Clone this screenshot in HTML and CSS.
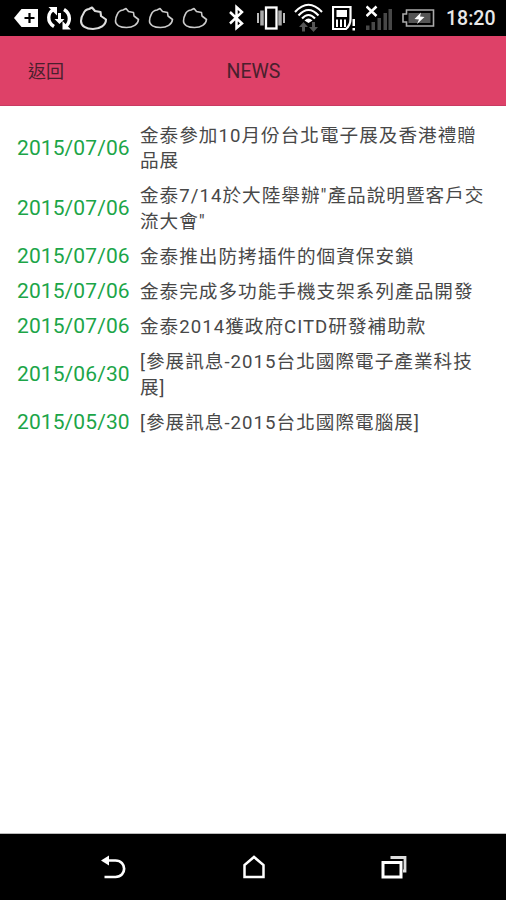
FILE: index.html
```
<!DOCTYPE html>
<html lang="zh-Hant">
<head>
    <meta charset="utf-8">
    <title>NEWS</title>
    <link rel="stylesheet" href="styles.css">
</head>
<body>
<div class="status">
    <svg class="icon" width="31" height="36" viewBox="0 0 31 36">
        <path fill="#fff" d="M0 18L7.500 9H24V27H7.500Z"/>
        <path stroke="#000" stroke-width="2.200" d="M10.500 18h10M15.500 13v10"/>
    </svg>
    <svg class="icon" width="34" height="36" viewBox="0 0 34 36">
        <path fill="none" stroke="#fff" stroke-width="3.400" d="M9 26.500C1.500 22 2.500 12 9 9.500M19 9.500C26.500 14 25.500 23 20 27"/>
        <path fill="#fff" d="M3.500 7h8.500v8.500zM26 29.500h-8.500v-8.500zM13 13h3v6h3.500l-5 5-5-5H13z"/>
    </svg>
    <svg class="icon" width="34" height="36" viewBox="0 0 34 36">
        <path class="cloud big" d="M4.500 13.500Q6 9.500 10 9L13 7.500 16 11 21.500 12 22 16 27 19.500C27 25 21 29 14 29 7 29 2 26 2 21Q2 17 4.500 13.500Z"/>
    </svg>
    <svg class="icon" width="34" height="36" viewBox="0 0 34 36">
        <path class="cloud" d="M4 15Q5.500 10.500 10 10L13 8.500 15.500 11.500 20.500 12.500 21 16 25.500 19.500C25 24.500 20 27.500 13.500 27.500 7 27.500 2.500 25 2.500 21Q2.500 17.500 4 15Z"/>
    </svg>
    <svg class="icon" width="34" height="36" viewBox="0 0 34 36">
        <path class="cloud" d="M4 15Q5.500 10.500 10 10L13 8.500 15.500 11.500 20.500 12.500 21 16 25.500 19.500C25 24.500 20 27.500 13.500 27.500 7 27.500 2.500 25 2.500 21Q2.500 17.500 4 15Z"/>
    </svg>
    <svg class="icon" width="47" height="36" viewBox="0 0 47 36">
        <path class="cloud" d="M4 15Q5.500 10.500 10 10L13 8.500 15.500 11.500 20.500 12.500 21 16 25.500 19.500C25 24.500 20 27.500 13.500 27.500 7 27.500 2.500 25 2.500 21Q2.500 17.500 4 15Z"/>
    </svg>
    <svg class="icon" width="29" height="36" viewBox="0 0 29 36">
        <path fill="none" stroke="#fff" stroke-width="2.500" d="M2 12L14 23.500 8.500 28V7L14 12 2 23.500"/>
    </svg>
    <svg class="icon" width="37" height="36" viewBox="0 0 37 36">
        <path stroke="#bbb" stroke-width="2" d="M1 13v10M27 13v10"/>
        <path stroke="#aaa" stroke-width="3.500" d="M5 10.500v15M23 10.500v15"/>
        <rect x="9" y="7.500" width="10.500" height="21" fill="#000" stroke="#fff" stroke-width="2.300"/>
    </svg>
    <svg class="icon" width="38" height="36" viewBox="0 0 38 36">
        <path fill="none" stroke="#fff" stroke-width="2.100" d="M1 12Q14.500-2.500 28 12M4.500 15.500Q14.500 4.500 24.500 15.500M8 18.500Q14.500 11.500 21 18.500"/>
        <path fill="#fff" d="M10.500 20.500Q14.500 16.500 18.500 20.500L14.500 23Z"/>
        <path fill="#555" d="M9.500 22l4.500 5h-3v4.500H8V27H5zM19.500 32l-4.500-5h3v-5h3v5h3z"/>
    </svg>
    <svg class="icon" width="34" height="36" viewBox="0 0 34 36">
        <path fill="none" stroke="#fff" stroke-width="2.200" d="M1 7H18.500V19Q18.500 25 14 29H1Z"/>
        <path fill="#fff" d="M4.500 10h10.500v7H4.500zM4 19.500h2V27H4zM8 19.500h2V27H8zM12 19.500h2V27h-2zM20.500 19h2.500v7h-2.500zM20.500 28h2.500v2.500h-2.500z"/>
    </svg>
    <svg class="icon" width="35" height="36" viewBox="0 0 35 36">
        <path fill="#484848" d="M0 25.500h3.500V30H0zM5.500 22H9v8H5.500zM11.500 18H15v12h-3.500zM17.500 13H21v17h-3.500zM22.500 9H26v21h-3.500z"/>
        <path stroke="#fff" stroke-width="2.600" d="M.5 6.500l10 9.500M10.500 6.500l-10 9.500"/>
    </svg>
    <svg class="icon" width="44" height="36" viewBox="0 0 44 36">
        <path fill="none" stroke="#aaa" stroke-width="1.600" d="M5.500 10H32.500V26H5.500V22H2V14H5.500Z"/>
        <rect x="7.500" y="13" width="22" height="10" fill="#555"/>
        <path fill="#fff" d="M20 12.500l-6.500 6.500 4.500.500-2 4.500 7.500-7-4.500-.500z"/>
    </svg>
    <span class="clock">18:20</span>
</div>

<div class="header">
    <span class="back">返回</span>
    <span class="title">NEWS</span>
</div>

<ul class="news">
    <li class="item"><span class="date">2015/07/06</span><span class="text">金泰參加10月份台北電子展及香港禮贈品展</span></li>
    <li class="item"><span class="date">2015/07/06</span><span class="text">金泰7/14於大陸舉辦"產品說明暨客戶交流大會"</span></li>
    <li class="item"><span class="date">2015/07/06</span><span class="text">金泰推出防拷插件的個資保安鎖</span></li>
    <li class="item"><span class="date">2015/07/06</span><span class="text">金泰完成多功能手機支架系列產品開發</span></li>
    <li class="item"><span class="date">2015/07/06</span><span class="text">金泰2014獲政府CITD研發補助款</span></li>
    <li class="item"><span class="date">2015/06/30</span><span class="text">[參展訊息-2015台北國際電子產業科技展]</span></li>
    <li class="item"><span class="date">2015/05/30</span><span class="text">[參展訊息-2015台北國際電腦展]</span></li>
</ul>

<div class="navbar">
    <svg width="28" height="28" viewBox="0 0 28 28">
        <path fill="none" stroke="#fff" stroke-width="2.700" d="M7 7.500H15.500C27 7.500 27 24 15.500 24H4.500"/>
        <path fill="#fff" d="M1 7.500L9 2.500V12.500Z"/>
    </svg>
    <svg width="28" height="28" viewBox="0 0 28 28">
        <path fill="none" stroke="#fff" stroke-width="2.500" d="M4.500 24V12L14 4l9.500 8v12Z"/>
    </svg>
    <svg width="28" height="28" viewBox="0 0 28 28">
        <path fill="none" stroke="#fff" stroke-width="3" d="M3 9.500H21V24H3Z"/>
        <path fill="none" stroke="#ddd" stroke-width="2.800" d="M10.500 4.500H25V18H23"/>
    </svg>
</div>
</body>
</html>
```
FILE: styles.css
```
body {
    margin: 0;
    height: 900px;
    display: flex;
    flex-direction: column;
    background: #fff;
    font-family: Roboto, "Noto Sans CJK TC", sans-serif;
    overflow: hidden;
}

.status {
    display: flex;
    height: 36px;
    padding-left: 14px;
    background: #000;
}

.icon {
    flex: none;
}

.cloud {
    fill: none;
    stroke: #ccc;
    stroke-width: 1.6;
    stroke-linejoin: round;
}

.big {
    stroke: #ddd;
    stroke-width: 2.1;
}

.clock {
    margin-left: 1px;
    color: #e8e8e8;
    font-size: 19.5px;
    font-weight: 500;
    line-height: 38px;
}

.header {
    display: grid;
    grid-template-columns: 1fr auto 1fr;
    align-items: center;
    height: 69px;
    border-bottom: 1px solid #c93a62;
    background: #de4168;
    color: #4a1f2d;
}

.back {
    padding: 2px 0 0 28px;
    font-size: 18px;
    line-height: 24px;
}

.title {
    padding: 2px 0 0 1px;
    font-size: 19.5px;
}

.news {
    flex: 1;
    margin: 0;
    padding: 12px 17px 0;
    list-style: none;
}

.item {
    display: flex;
    align-items: center;
    padding: 5px 0;
    line-height: 25.2px;
}

.date {
    flex: none;
    width: 123px;
    color: #1ca548;
    font-size: 21px;
    letter-spacing: 0.1px;
}

.text {
    padding-top: 1px;
    margin-bottom: -1px;
    color: #484848;
    font-size: 18.6px;
    letter-spacing: 1.03px;
}

.navbar {
    display: flex;
    justify-content: space-between;
    align-items: center;
    height: 66px;
    padding: 0 98px 0 100px;
    border-top: 1px solid #bbb;
    background: #000;
}
```
